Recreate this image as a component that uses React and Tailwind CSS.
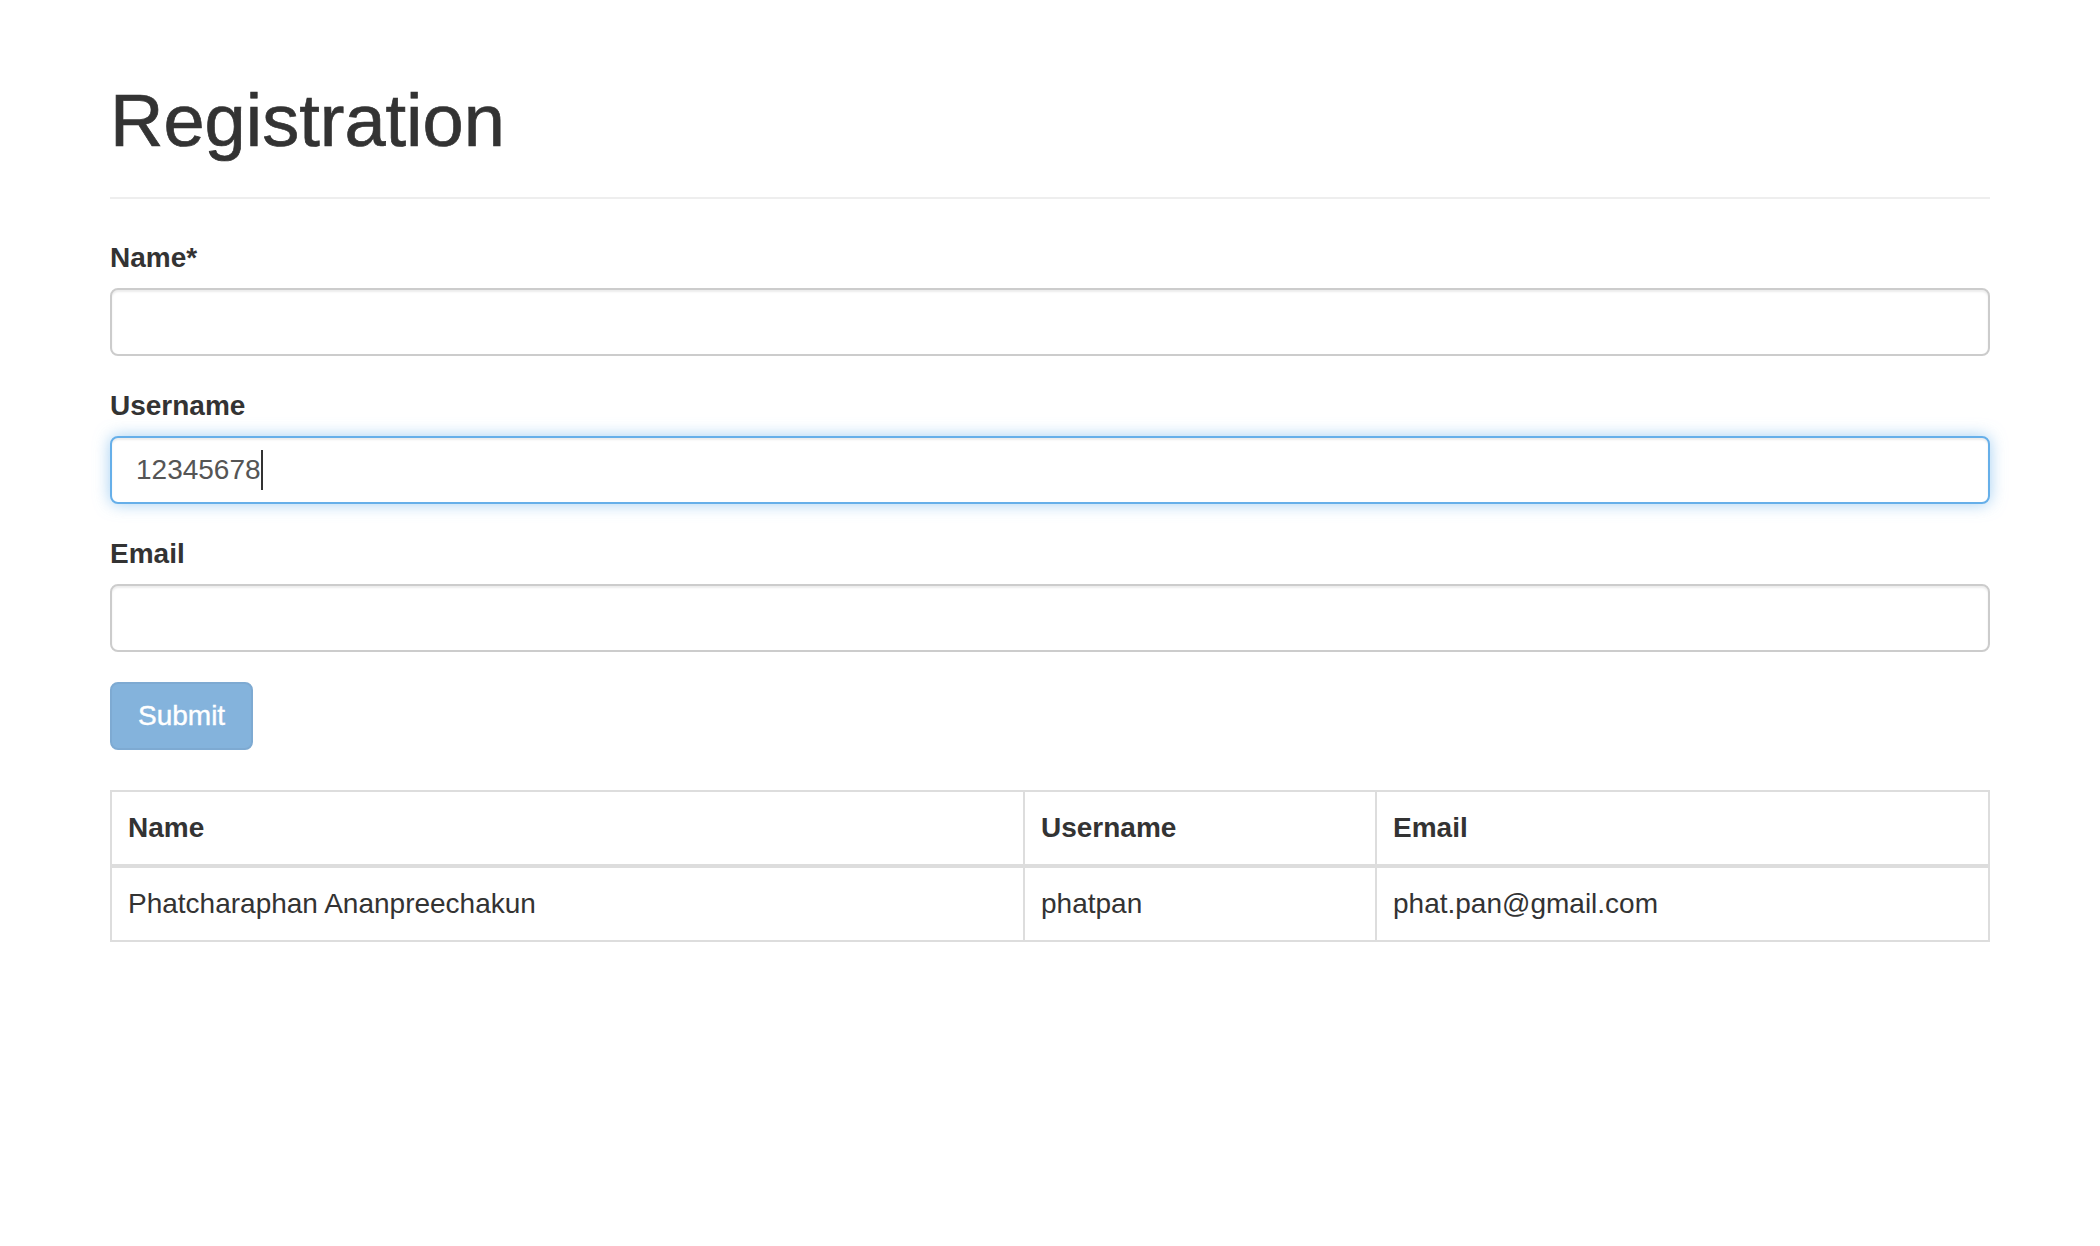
import React from 'react'

const rows = [
  { name: 'Phatcharaphan Ananpreechakun', username: 'phatpan', email: 'phat.pan@gmail.com' },
]

function Field({ label, value, focused }) {
  return (
    <div className="mb-[30px]">
      <label className="block mb-[10px] text-[28px] leading-[40px] font-bold text-[#333]">{label}</label>
      <div
        className={
          focused
            ? 'flex items-center h-[68px] px-[24px] rounded-[8px] border-2 border-[#66afe9] bg-white text-[28px] text-[#555] shadow-[inset_0_2px_2px_rgba(0,0,0,0.075),0_0_16px_rgba(102,175,233,0.6)]'
            : 'flex items-center h-[68px] px-[24px] rounded-[8px] border-2 border-[#ccc] bg-white text-[28px] text-[#555] shadow-[inset_0_2px_2px_rgba(0,0,0,0.075)]'
        }
      >
        {value && <span>{value}</span>}
        {focused && <span className="w-[2px] h-[40px] bg-[#333]" />}
      </div>
    </div>
  )
}

export default function App() {
  return (
    <div className="min-h-screen bg-white px-[110px] font-['Liberation_Sans',Arial,sans-serif] text-[#333]">
      {/* Page header */}
      <div className="pt-[81px] pb-[36px] border-b-2 border-[#eee]">
        <h1 className="text-[74px] leading-[80px] font-normal text-[#333] [-webkit-text-stroke:0.7px_#333]">Registration</h1>
      </div>

      {/* Form */}
      <form className="mt-[39px]" onSubmit={(e) => e.preventDefault()}>
        <Field label="Name*" />
        <Field label="Username" value="12345678" focused />
        <Field label="Email" />
        <button
          type="button"
          className="h-[68px] px-[26px] rounded-[8px] border-2 border-[#7eaad2] bg-[#84b3dc] text-white text-[28px] leading-[40px] [-webkit-text-stroke:0.4px_#fff]"
        >
          Submit
        </button>
      </form>

      {/* Submitted entries */}
      <table className="mt-[40px] w-full table-fixed border-collapse border-2 border-[#ddd] text-[28px] leading-[40px]">
        <colgroup>
          <col className="w-[913px]" />
          <col className="w-[352px]" />
          <col />
        </colgroup>
        <thead>
          <tr className="border-b-4 border-[#ddd]">
            <th className="p-[16px] text-left font-bold border-2 border-[#ddd] border-b-4">Name</th>
            <th className="p-[16px] text-left font-bold border-2 border-[#ddd] border-b-4">Username</th>
            <th className="p-[16px] text-left font-bold border-2 border-[#ddd] border-b-4">Email</th>
          </tr>
        </thead>
        <tbody>
          {rows.map((r) => (
            <tr key={r.username}>
              <td className="p-[16px] border-2 border-[#ddd]">{r.name}</td>
              <td className="p-[16px] border-2 border-[#ddd]">{r.username}</td>
              <td className="p-[16px] border-2 border-[#ddd]">{r.email}</td>
            </tr>
          ))}
        </tbody>
      </table>
    </div>
  )
}
